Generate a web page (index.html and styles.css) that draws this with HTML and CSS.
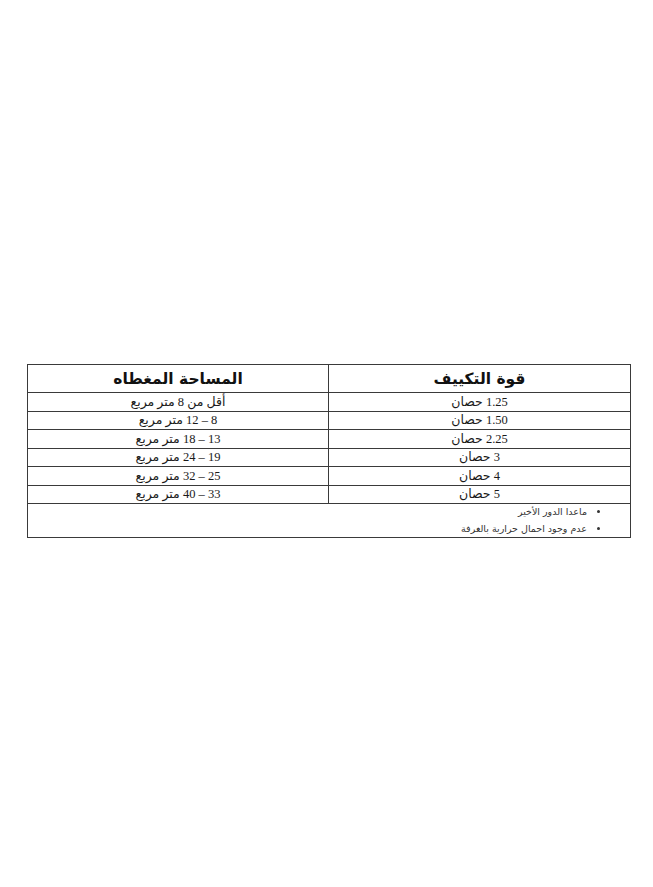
FILE: index.html
```html
<!DOCTYPE html>
<html lang="ar">
<head>
<meta charset="utf-8">
<link rel="stylesheet" href="styles.css">
</head>
<body>
<div class="page">
  <table class="ac-table" dir="rtl">
    <thead>
      <tr class="head-row">
        <th class="col-power">قوة التكييف</th>
        <th class="col-area">المساحة المغطاه</th>
      </tr>
    </thead>
    <tbody>
      <tr><td>1.25 حصان</td><td>أقل من 8 متر مربع</td></tr>
      <tr><td>1.50 حصان</td><td>8 – 12 متر مربع</td></tr>
      <tr><td>2.25 حصان</td><td>13 – 18 متر مربع</td></tr>
      <tr><td>3 حصان</td><td>19 – 24 متر مربع</td></tr>
      <tr><td>4 حصان</td><td>25 – 32 متر مربع</td></tr>
      <tr><td>5 حصان</td><td>33 – 40 متر مربع</td></tr>
      <tr class="notes-row">
        <td colspan="2">
          <ul class="notes">
            <li>ماعدا الدور الأخير</li>
            <li>عدم وجود احمال حرارية بالغرفة</li>
          </ul>
        </td>
      </tr>
    </tbody>
  </table>
</div>
</body>
</html>
```

FILE: styles.css
```css
html, body {
  margin: 0;
  padding: 0;
  background: #ffffff;
}

.page {
  padding: 364px 22px 0 27px;
}

.ac-table {
  width: 604px;
  border-collapse: collapse;
  font-family: "Liberation Serif", "DejaVu Sans", serif;
  color: #1a1a1a;
  table-layout: fixed;
}

.ac-table th,
.ac-table td {
  border: 1.5px solid #3a3a3a;
  text-align: center;
  padding: 0;
}

.col-power {
  width: 301px;
}

.head-row th {
  height: 27px;
  font-family: "DejaVu Sans", sans-serif;
  font-weight: bold;
  font-size: 15.5px;
  color: #111;
}

.ac-table tbody td {
  height: 17.5px;
  font-size: 12.5px;
  line-height: 14px;
}

.notes-row td {
  height: 32px;
  text-align: right;
  vertical-align: top;
}

.notes {
  margin: -1px 0 0 0;
  padding: 0 43px 0 0;
  font-family: "DejaVu Sans", sans-serif;
  font-size: 9.5px;
  line-height: 17px;
  color: #333;
  list-style: disc;
}

.notes li {
  padding-right: 0;
}
```
